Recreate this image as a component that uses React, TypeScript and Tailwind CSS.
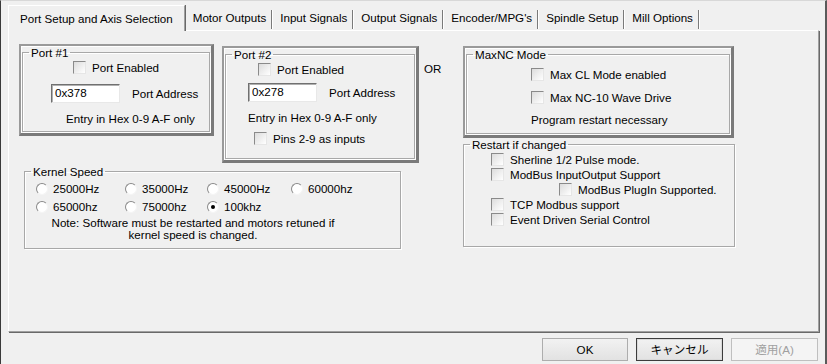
import React from 'react';

const font = { fontFamily: '"Liberation Sans", "Noto Sans CJK JP", Arial, sans-serif' };

const tabs = ['Motor Outputs', 'Input Signals', 'Output Signals', "Encoder/MPG's", 'Spindle Setup', 'Mill Options'];

const CheckBox: React.FC<{ label: string; className?: string }> = ({ label, className = '' }) => (
  <label className={`flex items-center gap-[6px] h-[15px] ${className}`}>
    <span className="w-[13px] h-[13px] shrink-0 bg-gradient-to-br from-[#dcdcdc] to-white border border-t-[#8a8a8a] border-l-[#8a8a8a] border-r-[#e6e6e6] border-b-[#e6e6e6]" />
    <span>{label}</span>
  </label>
);

const Radio: React.FC<{ label: string; checked?: boolean }> = ({ label, checked }) => (
  <label className="flex items-center gap-[5px] h-[16px]">
    <span className="w-[12px] h-[12px] shrink-0 rounded-full bg-white border border-t-[#8a8a8a] border-l-[#8a8a8a] border-r-[#f4f4f4] border-b-[#f4f4f4] flex items-center justify-center">
      {checked && <span className="w-[4px] h-[4px] rounded-full bg-black" />}
    </span>
    <span>{label}</span>
  </label>
);

const TextBox: React.FC<{ value: string }> = ({ value }) => (
  <div className="w-[69px] h-[19px] bg-white border border-t-[#707070] border-l-[#707070] border-r-[#e8e8e8] border-b-[#e8e8e8] shadow-[inset_1px_1px_0_#b0b0b0] pl-[3px] leading-[16px]">
    {value}
  </div>
);

// raised frame that wraps a group box (Port #1, Port #2, MaxNC)
const Frame: React.FC<{ className?: string; children: React.ReactNode }> = ({ className = '', children }) => (
  <div className={`border-t-2 border-l-2 border-r-[3px] border-b-[3px] border-t-[#9a9a9a] border-l-[#9a9a9a] border-r-[#7a7a7a] border-b-[#7a7a7a] shadow-[inset_1px_1px_0_#ffffff] px-[1px] pb-[1px] ${className}`}>
    {children}
  </div>
);

const Group: React.FC<{ title: string; className?: string; bodyClass?: string; children: React.ReactNode }> = ({
  title,
  className = '',
  bodyClass = '',
  children,
}) => (
  <fieldset className={`border border-[#a8a8a8] shadow-[inset_1px_1px_0_#ffffff,1px_1px_0_#ffffff] ${className}`}>
    <legend className="ml-[6px] px-[2px] leading-[13px]">{title}</legend>
    <div className={bodyClass}>{children}</div>
  </fieldset>
);

export default function App() {
  return (
    <div
      style={font}
      className="w-[827px] h-[364px] overflow-hidden bg-[#f0f0f0] text-[11.6px] text-black border-l border-l-[#3a3a3a] border-r-2 border-r-[#5a5a5a] border-t border-t-[#d8d8d8] flex flex-col"
    >
      {/* Tab strip */}
      <div className="flex items-end h-[29px] pl-[7px] pt-[3px]">
        <div className="h-[26px] px-[11px] pt-[4px] border-t border-l border-white border-r border-r-[#a0a0a0] shadow-[1px_0_0_#696969] bg-[#f0f0f0] -mb-px relative z-10">
          Port Setup and Axis Selection
        </div>
        {tabs.map((t) => (
          <div
            key={t}
            className="h-[19px] pl-[6px] pr-[5px] ml-[2px] border-r border-r-[#7a7a7a] shadow-[1px_0_0_#ffffff] leading-[16px] mb-[1px]"
          >
            {t}
          </div>
        ))}
      </div>

      {/* Tab page */}
      <div className="ml-[7px] w-[811px] h-[302px] border-t border-l border-t-white border-l-white border-r border-b border-r-[#a0a0a0] border-b-[#a0a0a0] shadow-[1px_1px_0_#696969] flex">
        {/* Left column */}
        <div className="w-[445px] pl-[10px] pt-[13px] flex flex-col">
          <div className="flex items-start">
            <Frame className="w-[195px] h-[92px]">
              <Group title="Port #1" className="h-[86px]" bodyClass="pl-[29px]">
                <CheckBox label="Port Enabled" className="ml-[21px] mt-[1px]" />
                <div className="flex items-center mt-[9px] -ml-[1px]">
                  <TextBox value="0x378" />
                  <span className="ml-[12px]">Port Address</span>
                </div>
                <div className="mt-[7px] ml-[14px]">Entry in Hex 0-9 A-F only</div>
              </Group>
            </Frame>
            <Frame className="w-[197px] h-[117px] ml-[8px] mt-[2px]">
              <Group title="Port #2" className="h-[111px]" bodyClass="pl-[22px]">
                <CheckBox label="Port Enabled" className="ml-[10px] mt-[1px]" />
                <div className="flex items-center mt-[6px]">
                  <TextBox value="0x278" />
                  <span className="ml-[12px]">Port Address</span>
                </div>
                <div className="mt-[7px]">Entry in Hex 0-9 A-F only</div>
                <CheckBox label="Pins 2-9 as inputs" className="ml-[6px] mt-[5px]" />
              </Group>
            </Frame>
            <span className="ml-[5px] mt-[16px]">OR</span>
          </div>

          <Group title="Kernel Speed" className="ml-[5px] mt-[2px] w-[377px] h-[84px]" bodyClass="pl-[11px]">
            <div className="grid grid-cols-[89px_82px_84px_90px] mt-[3px] gap-y-[2px]">
              <Radio label="25000Hz" />
              <Radio label="35000Hz" />
              <Radio label="45000Hz" />
              <Radio label="60000hz" />
              <Radio label="65000hz" />
              <Radio label="75000hz" />
              <Radio label="100khz" checked />
            </div>
            <div className="w-[314px] text-center leading-[12px] mt-[2px] whitespace-nowrap">
              Note: Software must be restarted and motors retuned if
              <br />
              kernel speed is changed.
            </div>
          </Group>
        </div>

        {/* Right column */}
        <div className="pt-[15px] flex flex-col">
          <Frame className="w-[271px] h-[92px] ml-[9px]">
            <Group title="MaxNC Mode" className="h-[86px]" bodyClass="pl-[64px]">
              <CheckBox label="Max CL Mode enabled" className="mt-[6px]" />
              <CheckBox label="Max NC-10 Wave Drive" className="mt-[8px]" />
              <div className="mt-[6px]">Program restart necessary</div>
            </Group>
          </Frame>
          <Group title="Restart if changed" className="ml-[9px] w-[272px] h-[109px]" bodyClass="pl-[27px] mt-[1px] flex flex-col">
            <CheckBox label="Sherline 1/2 Pulse mode." />
            <CheckBox label="ModBus InputOutput Support" />
            <CheckBox label="ModBus PlugIn Supported." className="ml-[68px]" />
            <CheckBox label="TCP Modbus support" />
            <CheckBox label="Event Driven Serial Control" />
          </Group>
        </div>
      </div>

      {/* Dialog buttons */}
      <div className="flex justify-end gap-[8px] mt-[6px] pr-[7px]">
        <button className="w-[86px] h-[23px] border border-[#adadad] bg-gradient-to-b from-[#f2f2f2] to-[#e2e2e2]">OK</button>
        <button className="w-[87px] h-[23px] border border-[#3c3c3c] shadow-[inset_0_0_0_1px_#dadada] bg-gradient-to-b from-[#f2f2f2] to-[#e2e2e2]">キャンセル</button>
        <button className="w-[87px] h-[23px] border border-[#bfbfbf] bg-[#f4f4f4] text-[#a0a0a0]">適用(A)</button>
      </div>
    </div>
  );
}
